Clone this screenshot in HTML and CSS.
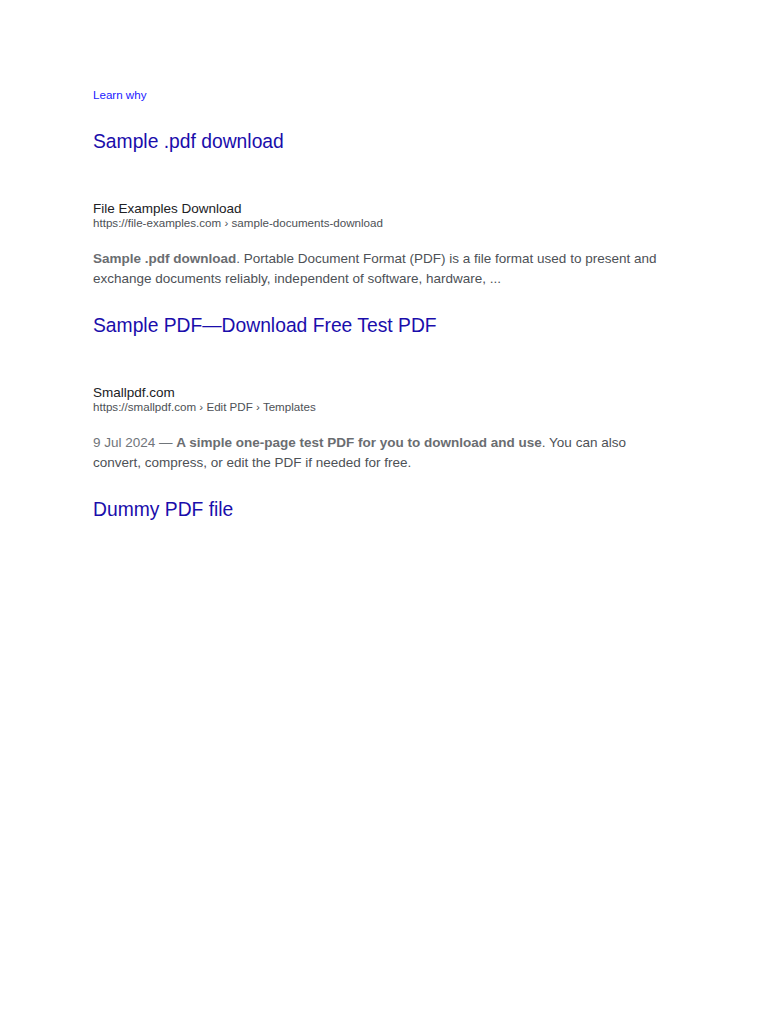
FILE: index.html
```html
<!DOCTYPE html>
<html lang="en">
<head>
<meta charset="utf-8">
<title>Sample PDF results</title>
<link rel="stylesheet" href="styles.css">
</head>
<body>
<main class="page">
  <a class="learn" href="#">Learn why</a>
  <section class="result">
    <a class="title" href="#">Sample .pdf download</a>
    <div class="site">File Examples Download</div>
    <div class="url">https://file-examples.com › sample-documents-download</div>
    <p class="snippet"><b>Sample .pdf download</b>. Portable Document Format (PDF) is a file format used to present and exchange documents reliably, independent of software, hardware, ...</p>
  </section>
  <section class="result">
    <a class="title" href="#">Sample PDF—Download Free Test PDF</a>
    <div class="site">Smallpdf.com</div>
    <div class="url">https://smallpdf.com › Edit PDF › Templates</div>
    <p class="snippet"><span class="date">9 Jul 2024 — </span><b>A simple one-page test PDF for you to download and use</b>. You can also convert, compress, or edit the PDF if needed for free.</p>
  </section>
  <section class="result">
    <a class="title" href="#">Dummy PDF file</a>
  </section>
</main>
</body>
</html>
```

FILE: styles.css
```css
html, body {
  margin: 0;
  padding: 0;
  background: #ffffff;
}
body {
  font-family: "Liberation Sans", Arial, sans-serif;
}
.page {
  padding: 87px 0 0 93px;
  width: 582px;
}
.learn {
  display: block;
  font-size: 11.6px;
  line-height: 16px;
  color: #1a1aff;
  text-decoration: none;
}
.result {
  margin-top: 26px;
}
.result + .result {
  margin-top: 24px;
}
.title {
  display: block;
  font-size: 19.3px;
  line-height: 26px;
  color: #1a0dab;
  text-decoration: none;
}
.site {
  margin-top: 46px;
  font-size: 13.5px;
  line-height: 16px;
  color: #202124;
}
.url {
  font-size: 11.6px;
  line-height: 12px;
  color: #4d5156;
}
.snippet {
  margin: 20px 0 0 0;
  font-size: 13.5px;
  line-height: 20px;
  color: #4d5156;
}
.snippet b {
  color: #6a6d71;
}
.date {
  color: #70757a;
}
```
